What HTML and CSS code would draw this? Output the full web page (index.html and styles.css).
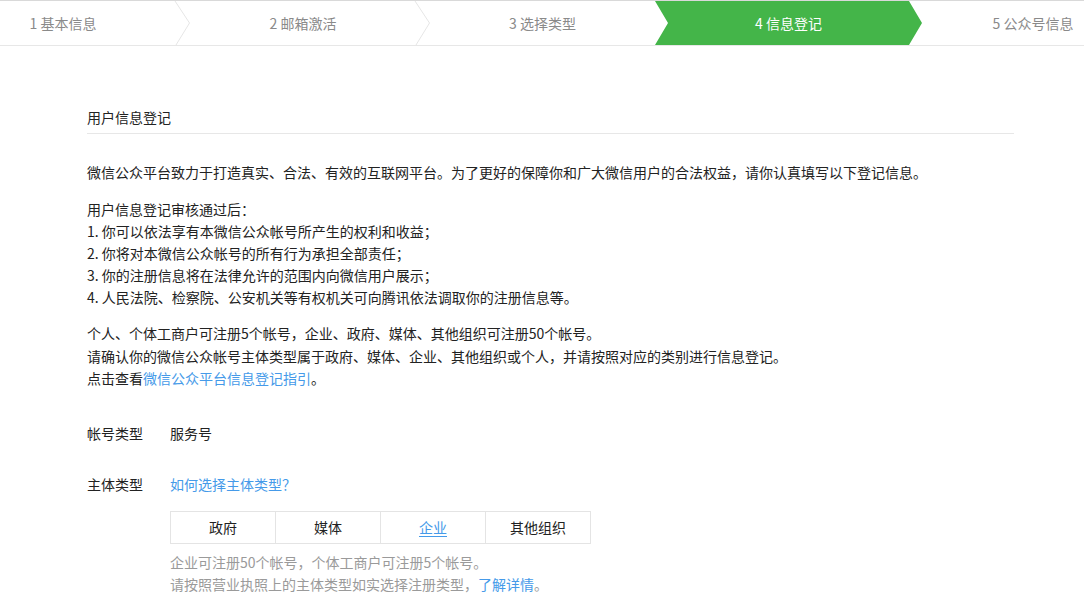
FILE: index.html
```html
<!DOCTYPE html>
<html lang="zh-CN">
<head>
<meta charset="utf-8">
<title>信息登记</title>
<link rel="stylesheet" href="styles.css">
</head>
<body>
<div class="stepper">
  <div class="step step-1"><span>1 基本信息</span>
    <svg class="chev" width="16" height="44" viewBox="0 0 16 44"><polyline points="1,0 15.5,22 2,44" fill="none" stroke="#e6e6e6" stroke-width="1"/></svg>
  </div>
  <div class="step step-2"><span>2 邮箱激活</span>
    <svg class="chev" width="16" height="44" viewBox="0 0 16 44"><polyline points="1,0 15.5,22 2,44" fill="none" stroke="#e6e6e6" stroke-width="1"/></svg>
  </div>
  <div class="step step-3"><span>3 选择类型</span></div>
  <div class="step step-4 active"><span>4 信息登记</span></div>
  <div class="step step-5"><span>5 公众号信息</span></div>
</div>

<div class="main">
  <h2 class="title">用户信息登记</h2>
  <p class="p1">微信公众平台致力于打造真实、合法、有效的互联网平台。为了更好的保障你和广大微信用户的合法权益，请你认真填写以下登记信息。</p>
  <div class="list">
    <div>用户信息登记审核通过后：</div>
    <div>1. 你可以依法享有本微信公众帐号所产生的权利和收益；</div>
    <div>2. 你将对本微信公众帐号的所有行为承担全部责任；</div>
    <div>3. 你的注册信息将在法律允许的范围内向微信用户展示；</div>
    <div>4. 人民法院、检察院、公安机关等有权机关可向腾讯依法调取你的注册信息等。</div>
  </div>
  <div class="list p3">
    <div>个人、个体工商户可注册5个帐号，企业、政府、媒体、其他组织可注册50个帐号。</div>
    <div>请确认你的微信公众帐号主体类型属于政府、媒体、企业、其他组织或个人，并请按照对应的类别进行信息登记。</div>
    <div>点击查看<a class="link" href="#">微信公众平台信息登记指引</a>。</div>
  </div>

  <div class="form-row row-type">
    <div class="label">帐号类型</div>
    <div class="value">服务号</div>
  </div>
  <div class="form-row row-subject">
    <div class="label">主体类型</div>
    <div class="value">
      <a class="link" href="#">如何选择主体类型？</a>
      <div class="tabs">
        <div class="tab">政府</div>
        <div class="tab">媒体</div>
        <div class="tab selected"><span>企业</span></div>
        <div class="tab">其他组织</div>
      </div>
      <div class="hint">
        <div>企业可注册50个帐号，个体工商户可注册5个帐号。</div>
        <div>请按照营业执照上的主体类型如实选择注册类型，<a class="link" href="#">了解详情</a>。</div>
      </div>
    </div>
  </div>
</div>
</body>
</html>
```
FILE: styles.css
```css
html, body {
  margin: 0;
  padding: 0;
  background: #fff;
}
body {
  font-family: "Noto Sans CJK SC", "Noto Sans", sans-serif;
  font-size: 14px;
  color: #222;
  overflow: hidden;
}
.stepper {
  display: flex;
  border-top: 1px solid #d9d9d9;
  border-bottom: 1px solid #e7e7e7;
  height: 44px;
  overflow: hidden;
  width: 1084px;
}
.step {
  position: relative;
  flex-shrink: 0;
  height: 44px;
  line-height: 44px;
  color: #8a8a8a;
  text-align: center;
  box-sizing: border-box;
}
.step-1 {
  width: 240px;
  margin-left: -50px;
  padding-right: 14px;
}
.step-2 {
  width: 240px;
  padding-right: 14px;
}
.step-3 {
  width: 225px;
}
.step-4 {
  width: 267px;
  padding: 0 13px;
}
.step-5 {
  width: 226px;
  padding-right: 4px;
}
.chev {
  position: absolute;
  right: 0;
  top: 0;
}
.step.active {
  background: #44b549;
  color: #fff;
  clip-path: polygon(0 0, 254px 0, 267px 50%, 254px 100%, 0 100%, 13px 50%);
}
.main {
  margin-left: 87px;
  width: 927px;
}
.title {
  margin: 60px 0 0;
  font-size: 14px;
  font-weight: normal;
  line-height: 22px;
  padding-bottom: 5px;
  border-bottom: 1px solid #e7e7e7;
}
.p1 {
  margin: 27px 0 0;
  line-height: 22px;
}
.list {
  margin-top: 15px;
  line-height: 22px;
}
.p3 {
  margin-top: 14px;
  line-height: 22.5px;
}
.link {
  color: #459ae9;
  text-decoration: none;
}
.form-row {
  display: flex;
  line-height: 22px;
}
.row-type {
  margin-top: 32px;
}
.row-subject {
  margin-top: 29px;
}
.label {
  width: 83px;
  flex-shrink: 0;
}
.value {
  display: flex;
  flex-direction: column;
  align-items: flex-start;
}
.tabs {
  display: flex;
  margin-top: 16px;
  border: 1px solid #e4e4e4;
  border-right: none;
}
.tab {
  width: 104px;
  height: 31px;
  line-height: 31px;
  text-align: center;
  border-right: 1px solid #e4e4e4;
  color: #222;
}
.tab.selected {
  color: #459ae9;
}
.tab.selected span {
  border-bottom: 1px solid #459ae9;
  line-height: 18px;
  display: inline-block;
}
.hint {
  margin-top: 7px;
  color: #9a9a9a;
  line-height: 22px;
}
```
